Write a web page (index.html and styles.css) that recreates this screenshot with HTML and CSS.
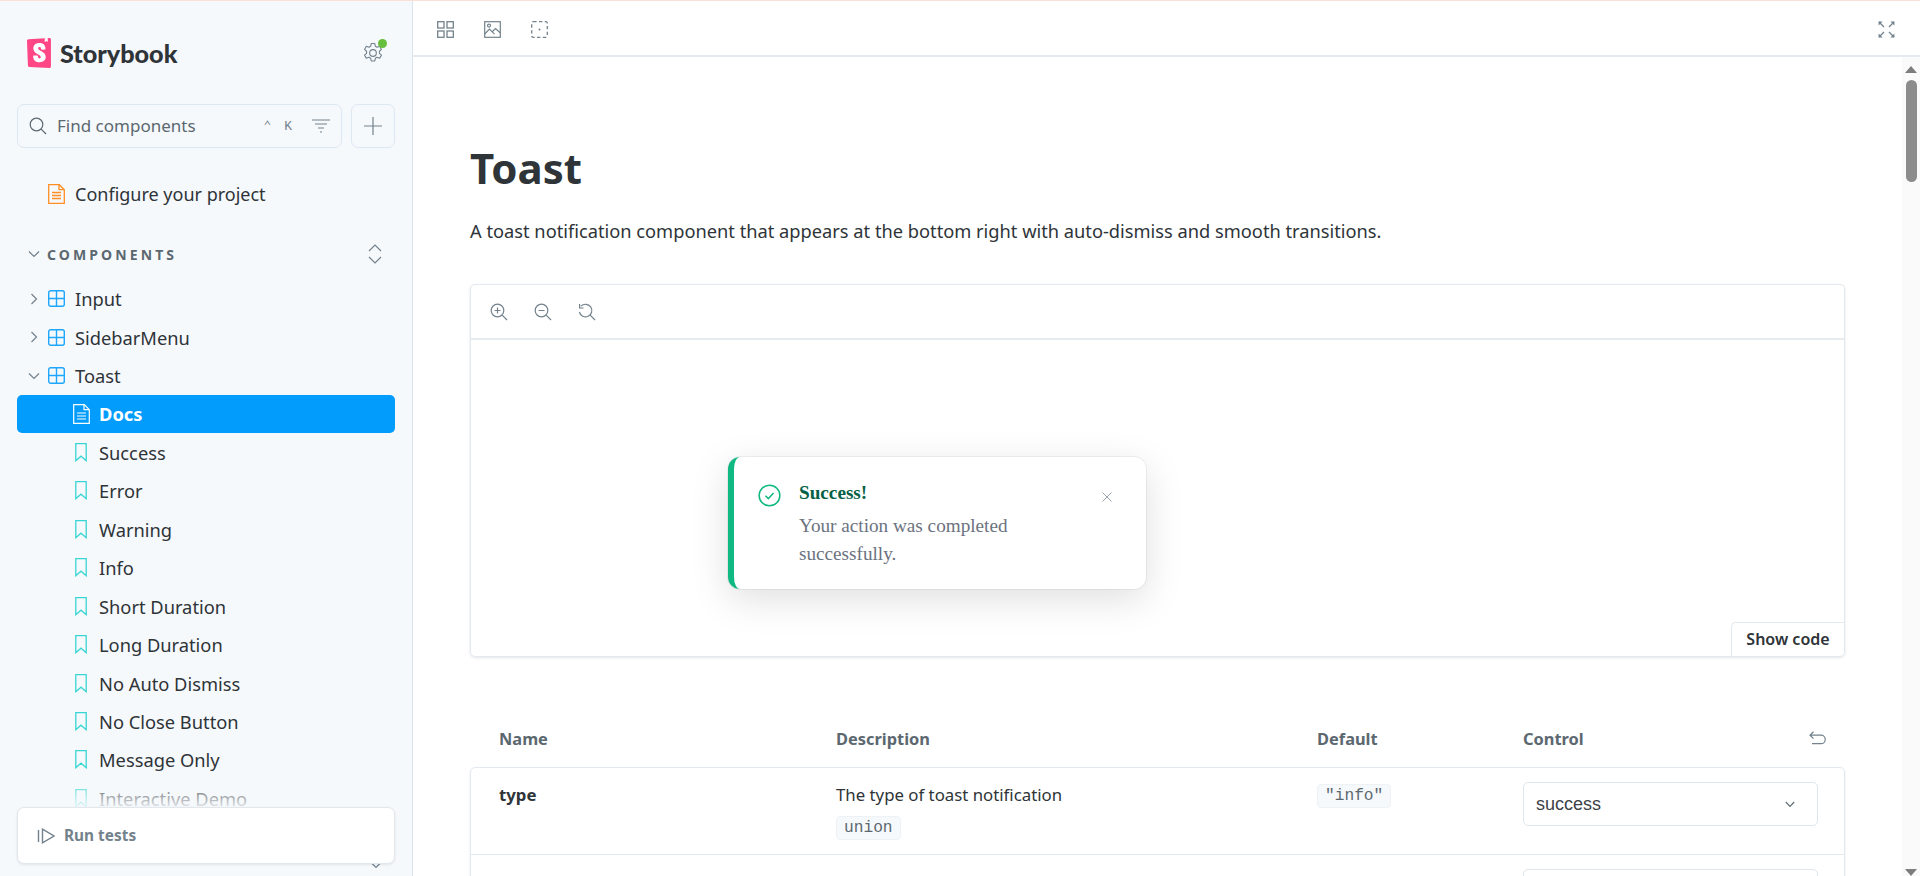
FILE: index.html
```html
<!DOCTYPE html>
<html lang="en">
<head>
<meta charset="utf-8">
<title>Toast - Docs</title>
<link rel="stylesheet" href="styles.css">
</head>
<body>
<div class="app">
  <aside class="sidebar">
    <div class="brand">
      <svg class="logo" viewBox="0 0 256 319"><path fill="#FF4785" d="M9.872 293.324.012 30.574C-.315 21.895 6.338 14.54 15.005 14L238.494.032c8.822-.552 16.42 6.153 16.972 14.975.02.332.031.665.031.998v286.314c0 8.839-7.165 16.004-16.004 16.004-.24 0-.48-.005-.718-.016l-213.627-9.595c-8.32-.373-14.963-7.065-15.276-15.388Z"/><path fill="#FFF" d="m188.665 39.127 1.527-36.716L220.884 0l1.322 37.863a2.387 2.387 0 0 1-3.864 1.96l-11.835-9.325-14.013 10.63a2.387 2.387 0 0 1-3.829-2.001Zm-39.251 80.853c0 6.227 41.942 3.243 47.572-1.131 0-42.402-22.752-64.684-64.415-64.684-41.662 0-65.005 22.628-65.005 56.57 0 59.117 79.78 60.249 79.78 92.494 0 9.052-4.433 14.426-14.184 14.426-12.705 0-17.729-6.49-17.138-28.552 0-4.786-48.458-6.278-49.936 0-3.762 53.466 29.548 68.887 67.665 68.887 36.935 0 65.892-19.687 65.892-55.326 0-63.36-80.961-61.663-80.961-93.06 0-12.728 9.455-14.425 15.07-14.425 5.909 0 16.546 1.042 15.66 24.801Z"/></svg>
      <span class="wordmark">Storybook</span>
      <span class="gear-wrap">
        <svg class="gear" viewBox="1.5 1 17 18" fill="none" stroke="#73828c" stroke-width="1"><circle cx="10" cy="10" r="3"/><path d="M8.4 1.5h3.2l.5 2.4 1.6.9 2.3-.8 1.6 2.8-1.8 1.6v1.9l1.8 1.6-1.6 2.8-2.3-.8-1.6.9-.5 2.4H8.4l-.5-2.4-1.6-.9-2.3.8-1.6-2.8 1.8-1.6V8.4L2.4 6.8 4 4l2.3.8 1.6-.9z" stroke-linejoin="round"/></svg>
        <span class="status-dot"></span>
      </span>
    </div>
    <div class="search-row">
      <div class="search">
        <svg class="ico-search" viewBox="0 0 18 18" fill="none" stroke="#5c6870" stroke-width="1.2"><circle cx="7.5" cy="7.5" r="6.3"/><path d="M12.2 12.2 17 17"/></svg>
        <span class="search-text">Find components</span>
        <span class="kbd">⌃ K</span>
        <svg class="ico-filter" viewBox="0 0 18 14" fill="none" stroke="#73828c" stroke-width="1.2"><path d="M0 1h18M3 5h12M6 9h6M8 13h2"/></svg>
      </div>
      <div class="add-btn"><svg viewBox="0 0 20 20" fill="none" stroke="#73828c" stroke-width="1.2"><path d="M10 1v18M1 10h18"/></svg></div>
    </div>

    <div class="tree-item top-item">
      <svg class="ico" viewBox="0 0 17 20" fill="none" stroke="#ff8f24" stroke-width="1.3"><path d="M.7.7h10.6l5 5v13.6H.7z"/><path d="M11 .7v5h5.3M4 8.5h9M4 11.5h9M4 14.5h9"/></svg>
      <span>Configure your project</span>
    </div>

    <div class="section-head">
      <svg class="chev" viewBox="0 0 12 8" fill="none" stroke="#73828c" stroke-width="1.2"><path d="M1 1.5 6 6.5l5-5"/></svg>
      <span class="section-title">COMPONENTS</span>
      <svg class="expand" viewBox="0 0 14 20" fill="none" stroke="#73828c" stroke-width="1.2"><path d="M1 7l6-6 6 6M1 13l6 6 6-6"/></svg>
    </div>

    <div class="tree">
      <div class="tree-item"><svg class="chev side" viewBox="0 0 8 12" fill="none" stroke="#73828c" stroke-width="1.2"><path d="M1.5 1 6.5 6l-5 5"/></svg><svg class="ico comp" viewBox="0 0 17 17" fill="none" stroke="#1ea7fd" stroke-width="1.4"><rect x=".7" y=".7" width="15.6" height="15.6" rx="2"/><path d="M8.5.7v15.6M.7 8.5h15.6"/></svg><span>Input</span></div>
      <div class="tree-item"><svg class="chev side" viewBox="0 0 8 12" fill="none" stroke="#73828c" stroke-width="1.2"><path d="M1.5 1 6.5 6l-5 5"/></svg><svg class="ico comp" viewBox="0 0 17 17" fill="none" stroke="#1ea7fd" stroke-width="1.4"><rect x=".7" y=".7" width="15.6" height="15.6" rx="2"/><path d="M8.5.7v15.6M.7 8.5h15.6"/></svg><span>SidebarMenu</span></div>
      <div class="tree-item"><svg class="chev" viewBox="0 0 12 8" fill="none" stroke="#73828c" stroke-width="1.2"><path d="M1 1.5 6 6.5l5-5"/></svg><svg class="ico comp" viewBox="0 0 17 17" fill="none" stroke="#1ea7fd" stroke-width="1.4"><rect x=".7" y=".7" width="15.6" height="15.6" rx="2"/><path d="M8.5.7v15.6M.7 8.5h15.6"/></svg><span>Toast</span></div>
      <div class="tree-item child active"><svg class="ico" viewBox="0 0 17 20" fill="none" stroke="#fff" stroke-width="1.2"><path d="M.7.7h10.6l5 5v13.6H.7z"/><path d="M11 .7v5h5.3M4 9h9M4 12h9M4 15h9"/></svg><span>Docs</span></div>
      <div class="tree-item child"><svg class="ico mark" viewBox="0 0 12 19" fill="none" stroke="#37d5d3" stroke-width="1.3"><path d="M.8.7h10.4v17L6 13.2.8 17.7z"/></svg><span>Success</span></div>
      <div class="tree-item child"><svg class="ico mark" viewBox="0 0 12 19" fill="none" stroke="#37d5d3" stroke-width="1.3"><path d="M.8.7h10.4v17L6 13.2.8 17.7z"/></svg><span>Error</span></div>
      <div class="tree-item child"><svg class="ico mark" viewBox="0 0 12 19" fill="none" stroke="#37d5d3" stroke-width="1.3"><path d="M.8.7h10.4v17L6 13.2.8 17.7z"/></svg><span>Warning</span></div>
      <div class="tree-item child"><svg class="ico mark" viewBox="0 0 12 19" fill="none" stroke="#37d5d3" stroke-width="1.3"><path d="M.8.7h10.4v17L6 13.2.8 17.7z"/></svg><span>Info</span></div>
      <div class="tree-item child"><svg class="ico mark" viewBox="0 0 12 19" fill="none" stroke="#37d5d3" stroke-width="1.3"><path d="M.8.7h10.4v17L6 13.2.8 17.7z"/></svg><span>Short Duration</span></div>
      <div class="tree-item child"><svg class="ico mark" viewBox="0 0 12 19" fill="none" stroke="#37d5d3" stroke-width="1.3"><path d="M.8.7h10.4v17L6 13.2.8 17.7z"/></svg><span>Long Duration</span></div>
      <div class="tree-item child"><svg class="ico mark" viewBox="0 0 12 19" fill="none" stroke="#37d5d3" stroke-width="1.3"><path d="M.8.7h10.4v17L6 13.2.8 17.7z"/></svg><span>No Auto Dismiss</span></div>
      <div class="tree-item child"><svg class="ico mark" viewBox="0 0 12 19" fill="none" stroke="#37d5d3" stroke-width="1.3"><path d="M.8.7h10.4v17L6 13.2.8 17.7z"/></svg><span>No Close Button</span></div>
      <div class="tree-item child"><svg class="ico mark" viewBox="0 0 12 19" fill="none" stroke="#37d5d3" stroke-width="1.3"><path d="M.8.7h10.4v17L6 13.2.8 17.7z"/></svg><span>Message Only</span></div>
      <div class="tree-item child"><svg class="ico mark" viewBox="0 0 12 19" fill="none" stroke="#37d5d3" stroke-width="1.3"><path d="M.8.7h10.4v17L6 13.2.8 17.7z"/></svg><span>Interactive Demo</span></div>
    </div>

    <div class="test-fade"></div>
    <svg class="stray-chev" viewBox="0 0 12 8" fill="none" stroke="#73828c" stroke-width="1.2"><path d="M1 1.5 6 6.5l5-5"/></svg>
    <div class="test-card">
      <svg viewBox="0 0 18 16" fill="none" stroke="#73828c" stroke-width="1.4"><path d="M1.5 2v12M5.5 1.2 17 8 5.5 14.8z"/></svg>
      <span>Run tests</span>
    </div>
  </aside>

  <main class="main">
    <div class="toolbar">
      <svg class="tool" viewBox="0 0 17 17" fill="none" stroke="#73828c" stroke-width="1.3"><rect x=".7" y=".7" width="6.3" height="6.3"/><rect x="10" y=".7" width="6.3" height="6.3"/><rect x=".7" y="10" width="6.3" height="6.3"/><rect x="10" y="10" width="6.3" height="6.3"/></svg>
      <svg class="tool" viewBox="0 0 17 17" fill="none" stroke="#73828c" stroke-width="1.2"><rect x=".7" y=".7" width="15.6" height="15.6"/><circle cx="5" cy="4.6" r="1.5"/><path d="M.7 13 5.5 8.2l5 5M8.5 10.5l3-3 5 4.5"/></svg>
      <svg class="tool" viewBox="0 0 17 17" fill="none" stroke="#73828c" stroke-width="1.3"><rect x=".7" y=".7" width="15.6" height="15.6" rx="1.5" stroke-dasharray="3.4 2.4"/><circle cx="8.5" cy="8.5" r="1" fill="#73828c" stroke="none"/></svg>
      <svg class="tool full" viewBox="0 0 17 17" fill="none" stroke="#73828c" stroke-width="1.3"><path d="M1 1l5 5M16 1l-5 5M1 16l5-5M16 16l-5-5"/><path d="M.6.6h4L.6 4.6zM16.4.6h-4l4 4zM.6 16.4h4l-4-4zM16.4 16.4h-4l4-4z" fill="#73828c" stroke="none"/></svg>
    </div>

    <div class="scroll-area">
      <div class="doc">
        <h1 class="title">Toast</h1>
        <p class="lead">A toast notification component that appears at the bottom right with auto-dismiss and smooth transitions.</p>

        <section class="story">
          <div class="story-bar">
            <svg class="zoom" viewBox="0 0 18 18" fill="none" stroke="#73828c" stroke-width="1.2"><circle cx="7.5" cy="7.5" r="6.3"/><path d="M12.2 12.2 17 17M7.5 4.5v6M4.5 7.5h6"/></svg>
            <svg class="zoom" viewBox="0 0 18 18" fill="none" stroke="#73828c" stroke-width="1.2"><circle cx="7.5" cy="7.5" r="6.3"/><path d="M12.2 12.2 17 17M4.5 7.5h6"/></svg>
            <svg class="zoom" viewBox="0 0 18 18" fill="none" stroke="#73828c" stroke-width="1.2"><path d="M3 3.2A6.3 6.3 0 1 1 1.4 9M12.2 12.2 17 17"/><path d="M1.6 1v4h4"/></svg>
          </div>
          <div class="canvas">
            <div class="toast">
              <svg class="toast-ico" viewBox="0 0 24 24" fill="none" stroke="#10b981" stroke-width="1.6"><circle cx="12" cy="12" r="10.8"/><path d="M7.8 12.3l3 3 5.4-6"/></svg>
              <div class="toast-body">
                <div class="toast-title">Success!</div>
                <div class="toast-msg">Your action was completed successfully.</div>
              </div>
              <svg class="toast-x" viewBox="0 0 10 10" fill="none" stroke="#9ca3af" stroke-width="1"><path d="M.5.5l9 9M9.5.5l-9 9"/></svg>
            </div>
            <div class="show-code">Show code</div>
          </div>
        </section>

        <div class="thead">
          <span class="c-name">Name</span>
          <span class="c-desc">Description</span>
          <span class="c-def">Default</span>
          <span class="c-ctl">Control</span>
          <svg class="reset" viewBox="0 0 17 14" fill="none" stroke="#73828c" stroke-width="1.2"><path d="M4.5.8 1 4.2l3.5 3.4M1 4.2h11a4 4 0 0 1 0 8.5H3"/></svg>
        </div>
        <div class="tbody">
          <div class="trow">
            <div class="c-name prop">type</div>
            <div class="c-desc"><div>The type of toast notification</div><code class="chip summary">union</code></div>
            <div class="c-def raised"><code class="chip">"info"</code></div>
            <div class="c-ctl raised"><div class="select"><span>success</span><svg viewBox="0 0 10 7" fill="none" stroke="#5c6870" stroke-width="1.1"><path d="M.8 1 5 5.4 9.2 1"/></svg></div></div>
          </div>
          <div class="trow">
            <div class="c-name prop">title</div>
            <div class="c-desc"><div>The title/headline of the toast</div></div>
            <div class="c-def raised"></div>
            <div class="c-ctl raised"><div class="select"></div></div>
          </div>
        </div>
      </div>
    </div>
    <div class="scrollbar">
      <span class="arrow up"></span>
      <span class="thumb"></span>
      <span class="arrow down"></span>
    </div>
  </main>
</div>
</body>
</html>
```

FILE: styles.css
```css
* { box-sizing: border-box; }
html, body { margin: 0; height: 100%; overflow: hidden; }
body { font-family: "Noto Sans", Arial, sans-serif; color: #2e3438; background: #fff; font-size: 18.3px; }
svg { display: block; flex: none; }

.app { display: flex; height: 876px; border-top: 1px solid #fbe0d8; }

/* sidebar */
.sidebar { width: 413px; flex: none; position: relative; background: #f6f9fc; border-right: 1px solid #d9e4ee; padding: 0 17px; overflow: hidden; }
.brand { display: flex; align-items: center; height: 30px; margin: 37px 0 0 10px; }
.logo { width: 24px; height: 30px; }
.wordmark { font-family: "Lato", sans-serif; font-weight: 900; font-size: 25.2px; margin-left: 9px; color: #2e3438; }
.gear-wrap { margin-left: auto; margin-right: 12px; position: relative; width: 20px; height: 20px; }
.gear { width: 20px; height: 20px; }
.status-dot { position: absolute; top: -4px; right: -4px; width: 9px; height: 9px; border-radius: 50%; background: #66bf3c; }

.search-row { display: flex; gap: 9px; margin-top: 36px; height: 44px; }
.search { flex: 1; display: flex; align-items: center; border: 1.5px solid #dce8f3; border-radius: 7px; padding: 0 11px 0 11px; }
.ico-search { width: 18px; height: 18px; }
.search-text { margin-left: 10px; color: #5c6870; font-size: 17px; line-height: 1; margin-top: -2px; }
.kbd { margin-left: auto; font-family: "Liberation Mono", monospace; font-size: 13px; color: #73828c; margin-right: 20px; word-spacing: 5px; }
.ico-filter { width: 18px; height: 14px; }
.add-btn { width: 44px; display: flex; align-items: center; justify-content: center; border: 1.5px solid #dce8f3; border-radius: 7px; }
.add-btn svg { width: 20px; height: 20px; }

.tree-item { display: flex; align-items: center; height: 38.45px; padding-left: 31px; position: relative; white-space: nowrap; color: #2e3438; }
.tree-item .ico { width: 17px; margin-right: 10px; }
.top-item { margin-top: 27px; font-size: 18px; }
.top-item .ico { height: 20px; }
.section-head { display: flex; align-items: center; height: 20px; margin-top: 31px; padding-left: 11px; }
.chev { width: 12px; height: 8px; }
.section-title { font-size: 14px; font-weight: 700; letter-spacing: 3.1px; color: #5c6870; margin-left: 7px; }
.expand { width: 14px; height: 20px; margin-left: auto; margin-right: 13px; }

.tree { margin-top: 15px; }
.tree .chev { position: absolute; left: 11px; top: 15.5px; }
.tree .chev.side { width: 8px; height: 12px; left: 13px; top: 13.5px; }
.comp { height: 17px; }
.child { padding-left: 56px; }
.child .ico { width: 17px; margin-right: 9px; }
.child .mark { width: 12px; height: 19px; margin-left: 2px; margin-right: 12px; }
.active { background: #029cfd; color: #fff; font-weight: 700; border-radius: 5px; }
.active .ico { height: 20px; }

.test-fade { position: absolute; left: 0; right: 0; top: 775px; height: 35px; background: linear-gradient(to bottom, rgba(246,249,252,0), #f6f9fc); }
.test-card { position: absolute; left: 17px; right: 17px; top: 806px; height: 57px; background: #fff; border: 1px solid #e2e7ec; border-radius: 7px; box-shadow: 0 1px 3px rgba(0,0,0,.08); display: flex; align-items: center; padding-left: 19px; color: #73828c; font-weight: 700; font-size: 15.4px; }
.test-card svg { width: 18px; height: 16px; margin-right: 9px; }
.stray-chev { position: absolute; left: 370px; top: 860px; width: 12px; height: 8px; }

/* main */
.main { flex: 1; min-width: 0; display: grid; grid-template-columns: 1fr 18px; grid-template-rows: 56px 1fr; }
.toolbar { grid-column: 1 / -1; display: flex; align-items: center; gap: 30px; border-bottom: 2px solid #e4eaef; padding: 3px 25px 0 24px; }
.tool { width: 17px; height: 17px; }
.full { margin: 0 0 0 auto; }
.scroll-area { overflow: hidden; min-height: 0; }
.doc { padding: 0 57px 0 57px; }
.title { font-size: 42px; font-weight: 700; line-height: 46px; margin: 88px 0 0; color: #2e3438; }
.lead { margin: 26px 0 0; line-height: 28px; font-size: 18.25px; color: #2e3438; white-space: nowrap; }

.story { margin-top: 39px; height: 373px; border: 1px solid #e3e9ee; border-radius: 5px; box-shadow: 0 1px 3px rgba(0,0,0,.1); display: flex; flex-direction: column; }
.story-bar { height: 55px; display: flex; align-items: center; gap: 26px; padding-left: 19px; border-bottom: 2px solid #e6ebef; flex: none; }
.zoom { width: 18px; height: 18px; }
.canvas { flex: 1; position: relative; }
.toast { position: absolute; left: 257px; top: 117px; width: 418px; height: 132px; background: #fff; border-radius: 12px; border-left: 6px solid #10b981; box-shadow: 0 10px 38px rgba(0,0,0,.13), 0 0 0 1px rgba(0,0,50,.05); display: flex; font-family: "Liberation Serif", serif; padding: 27px 0 0 24px; }
.toast-ico { width: 23px; height: 23px; }
.toast-body { margin-left: 18px; width: 240px; }
.toast-title { font-weight: 700; font-size: 19.2px; line-height: 22px; color: #065f46; margin-top: -2px; }
.toast-msg { font-size: 19.2px; line-height: 28px; color: #6b7280; margin-top: 8px; }
.toast-x { width: 10px; height: 10px; position: absolute; right: 34px; top: 35px; }
.show-code { position: absolute; right: 0; bottom: 0; width: 113px; height: 34px; padding-bottom: 2px; border: 1px solid #e3e9ee; border-right: 0; border-bottom: 0; border-top-left-radius: 5px; display: flex; align-items: center; justify-content: center; font-weight: 600; font-size: 16px; color: #2e3438; }

.thead { display: flex; align-items: center; height: 28px; margin-top: 67px; position: relative; font-weight: 700; color: #5c6870; font-size: 16.4px; }
.c-name { width: 366px; padding-left: 29px; flex: none; }
.c-desc { width: 481px; flex: none; }
.c-def { width: 206px; flex: none; }
.c-ctl { flex: 1; }
.reset { position: absolute; right: 19px; top: 7px; width: 17px; height: 14px; }

.tbody { margin-top: 15px; border: 1px solid #e3e9ee; border-radius: 5px; box-shadow: 0 1px 3px rgba(0,0,0,.08); }
.tbody .c-name { width: 365px; padding-left: 28px; }
.trow { display: flex; height: 87px; border-bottom: 1px solid #e3e9ee; padding-top: 15px; font-size: 16.8px; }
.trow + .trow { padding-top: 16px; }
.trow + .trow .raised { margin-top: -2px; }
.prop { font-weight: 700; }
.raised { margin-top: -1px; }
.chip { display: inline-block; font-family: "Liberation Mono", monospace; font-size: 16.2px; line-height: 22px; padding: 0 7px; background: #f6f9fc; border: 1px solid #eef2f5; border-radius: 4px; color: #5c6870; }
.summary { margin-top: 10px; }
.select { width: 295px; height: 44px; border: 1.5px solid #e0e6eb; border-radius: 5px; display: flex; align-items: center; justify-content: space-between; padding: 0 22px 0 12px; font-family: "Liberation Sans", sans-serif; font-size: 18px; color: #3c4247; }
.select svg { width: 10px; height: 7px; }

.scrollbar { background: #fafafa; position: relative; display: flex; flex-direction: column; align-items: center; }
.thumb { position: absolute; top: 23px; width: 11px; height: 102px; left: 4px; border-radius: 6px; background: #8c8c8c; }
.arrow { position: absolute; left: 3px; width: 0; height: 0; border-left: 6.5px solid transparent; border-right: 6.5px solid transparent; }
.arrow.up { top: 9px; border-bottom: 7px solid #7d7d7d; }
.arrow.down { bottom: 0; border-top: 7px solid #7d7d7d; }
```
